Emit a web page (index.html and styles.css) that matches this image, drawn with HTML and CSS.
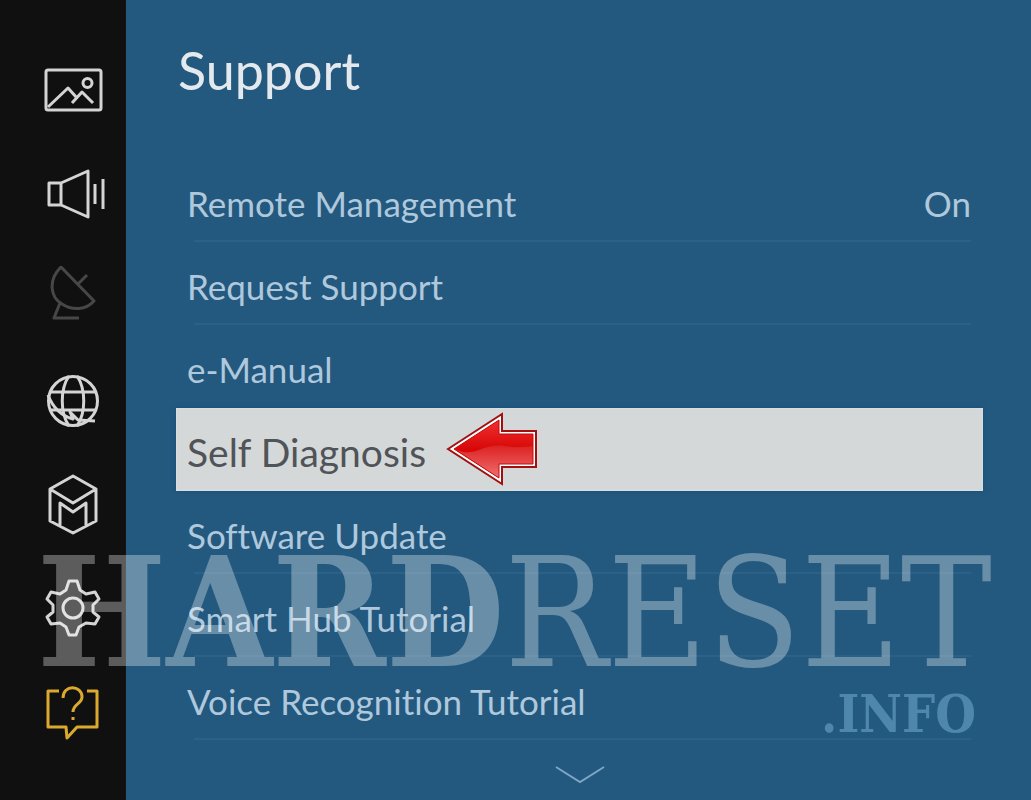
FILE: index.html
```html
<!DOCTYPE html>
<html lang="en">
<head>
<meta charset="utf-8">
<meta name="viewport" content="width=device-width, initial-scale=1">
<title>Support</title>
<link rel="stylesheet" href="styles.css">
</head>
<body>
<div class="screen">
  <nav class="sidebar" aria-label="Settings">
    <button class="nav-item" type="button" aria-label="Picture">
      <svg viewBox="0 0 64 64"><rect x="5" y="12" width="55" height="40" rx="2"/><path d="M7 49 27 30l9 10M31 45l10-11 11 11"/><circle cx="46.500" cy="25" r="4.500"/></svg>
    </button>
    <button class="nav-item" type="button" aria-label="Sound">
      <svg viewBox="0 0 64 64"><path d="M8 21h12v22H8zM20 21 47 9v46L20 43M54 22v20M62 17v30"/></svg>
    </button>
    <button class="nav-item nav-item-off" type="button" aria-label="Broadcasting" disabled>
      <svg viewBox="0 0 64 64"><path d="M20 1C7 14 9 31 21 38c11 7 24 6 32-3zM37 18l9-9M19 37l-6 15h25"/></svg>
    </button>
    <button class="nav-item" type="button" aria-label="Network">
      <svg viewBox="0 0 64 64"><circle cx="32" cy="31" r="24.500"/><path d="M28 6c-9 13-9 37 0 50M36 6c9 13 9 37 0 50M9 22h46M9 40h46"/><path d="M7 25c5 13 14 21 25 24l-3-7 8 8 17 1"/></svg>
    </button>
    <button class="nav-item" type="button" aria-label="Smart Hub">
      <svg viewBox="0 0 64 64"><path d="m32 2 23 13v32L32 59 9 47V15zM9 15l23 14 23-14M19 52V29l13 9 13-9v23"/></svg>
    </button>
    <button class="nav-item" type="button" aria-label="System">
      <svg viewBox="0 0 64 64"><path d="M28 3h8l3 9 6 4 9-2 4 7-6 6v7l6 5-4 7-9-1-7 4-3 8h-7l-3-8-6-4-9 1-4-7 6-5v-7l-6-6 4-7 9 2 6-4z"/><circle cx="32" cy="30" r="10"/></svg>
    </button>
    <button class="nav-item nav-item-active" type="button" aria-label="Support" aria-current="page">
      <svg viewBox="0 0 64 64"><path d="M18 9H7v36h18l1 11 10-11h20V9H46M22 16c0-14 19-13 19-1 0 7-9 7-9 15M32 35v3"/></svg>
    </button>
  </nav>
  <main class="panel">
    <h1 class="title">Support</h1>
    <ul class="menu">
      <li class="row"><button class="row-button" type="button"><span>Remote Management</span><span class="value">On</span></button></li>
      <li class="row"><button class="row-button" type="button">Request Support</button></li>
      <li class="row row-plain"><button class="row-button" type="button">e-Manual</button></li>
      <li class="row row-selected"><button class="row-button" type="button">Self Diagnosis
        <svg class="arrow" viewBox="0 0 92 74" aria-hidden="true">
          <defs>
            <linearGradient id="red" x1="0" y1="0" x2="0" y2="1"><stop offset="0" stop-color="#f03030"/><stop offset=".5" stop-color="#d80808"/><stop offset="1" stop-color="#d81010"/></linearGradient>
            <linearGradient id="gloss" x1="0" y1="0" x2="0" y2="1"><stop offset="0" stop-color="#dc2222"/><stop offset="1" stop-color="#f07070"/></linearGradient>
          </defs>
          <path d="M2 37 56 2v17h34v36H56v17z" fill="#fff" stroke="#a01010" stroke-width="2"/>
          <path d="M8 37 53 8v14h34v30H53v14z" fill="url(#red)"/>
          <path d="M8 37c22 10 28-6 50-3 12 2 20 1 29 0v18H53v14z" fill="url(#gloss)"/>
          <path d="M8 37 53 8v14h34v30H53v14z" fill="none" stroke="#c00c0c"/>
        </svg>
      </button></li>
      <li class="row"><button class="row-button" type="button">Software Update</button></li>
      <li class="row"><button class="row-button" type="button">Smart Hub Tutorial</button></li>
      <li class="row"><button class="row-button" type="button">Voice Recognition Tutorial</button></li>
    </ul>
    <button class="more" type="button" aria-label="More"><svg viewBox="0 0 52 20"><path d="m2 2 24 15L50 2"/></svg></button>
  </main>
  <div class="watermark"><div class="brand"><b>HARD</b>RESET</div><div class="domain">.INFO</div></div>
</div>
</body>
</html>
```
FILE: styles.css
```css
* { box-sizing: border-box; }

body {
  margin: 0;
  background: #23597f;
  font-family: Lato, "Noto Sans", sans-serif;
  font-variant-ligatures: none;
}

button {
  margin: 0;
  padding: 0;
  border: 0;
  background: none;
  color: inherit;
  font: inherit;
  font-variant-ligatures: none;
}

.screen {
  position: relative;
  display: grid;
  grid-template-columns: 126px 1fr;
  min-height: 100vh;
  overflow: hidden;
}

.sidebar {
  display: flex;
  flex-direction: column;
  padding: 38px 0 0 20px;
  background: #101010;
  border-right: 1px solid #171311;
}

.nav-item {
  display: grid;
  place-items: center;
  height: 104px;
  color: #d4d4d4;
}

.nav-item svg {
  width: 64px;
  height: 64px;
  fill: none;
  stroke: currentColor;
  stroke-width: 3;
  stroke-linejoin: round;
}

.nav-item-off { color: #474747; }
.nav-item-active { color: #dba92e; }

.panel {
  display: flex;
  flex-direction: column;
  padding: 0 48px 0 50px;
  color: #afc8dc;
}

.title {
  margin: 0;
  height: 159px;
  padding: 35px 0 0 2px;
  color: #e4e9ee;
  font-size: 52px;
  font-weight: 400;
  line-height: 70px;
}

.menu {
  margin: 0;
  padding: 0;
  list-style: none;
}

.row {
  position: relative;
  height: 83px;
}

.row::after {
  content: "";
  position: absolute;
  inset: auto 12px 0 18px;
  height: 2px;
  background: #2b6087;
}

.row-plain::after,
.row-selected::after { content: none; }

.row-selected {
  background: #d5d8d9;
  color: #505357;
  box-shadow: 0 0 2px #e6eaec inset, 0 0 4px #164f7b;
}

.row-button {
  display: flex;
  align-items: center;
  width: 100%;
  height: 100%;
  padding: 4px 12px 0 11px;
  font-size: 35px;
  line-height: 48px;
  text-align: left;
}

.row-selected .row-button { font-size: 39px; }

.value { margin-left: auto; }

.arrow {
  width: 92px;
  height: 74px;
  margin: 0 0 6px 20px;
}

.more {
  display: grid;
  place-items: center;
  height: 52px;
  padding-top: 18px;
}

.more svg {
  width: 52px;
  height: 20px;
  fill: none;
  stroke: #7ea5c5;
  stroke-width: 2;
}

.watermark {
  position: absolute;
  right: 39px;
  top: 537px;
  font-family: "DejaVu Serif Condensed", "DejaVu Serif", serif;
  text-align: right;
  white-space: nowrap;
  pointer-events: none;
}

.brand {
  color: rgba(255, 255, 255, .32);
  font-size: 152px;
  line-height: 152px;
}

.domain {
  padding-right: 16px;
  color: #4f86ac;
  font-size: 52px;
  font-weight: 700;
  line-height: 48px;
}
```
